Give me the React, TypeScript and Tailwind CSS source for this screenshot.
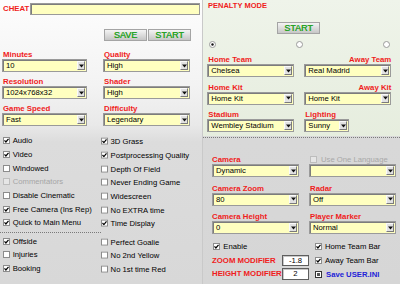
import React from "react";

function Lbl({ children, className = "" }: { children: React.ReactNode; className?: string }) {
  return (
    <div className={`whitespace-nowrap text-[7.8px] font-bold leading-[8px] text-[#f01c1c] ${className}`}>
      {children}
    </div>
  );
}

function Arrow() {
  return (
    <svg width="5" height="4" viewBox="0 0 5 4">
      <path d="M0 0.5H5L2.5 3.5Z" fill="#111" />
    </svg>
  );
}

function Select({ value, className = "" }: { value: string; className?: string }) {
  return (
    <div
      className={`flex h-[13px] border border-[#9a9a9a] bg-[#ffffc0] shadow-[inset_1px_1px_0_#7c7c7c] ${className}`}
    >
      <span className="flex-1 overflow-hidden whitespace-nowrap pl-[3px] text-[7.7px] leading-[11px] text-black">
        {value}
      </span>
      <span className="m-[1px] flex w-[8px] items-center justify-center border border-b-[#7a7a7a] border-l-[#fafafa] border-r-[#7a7a7a] border-t-[#fafafa] bg-[#e2e2e2]">
        <Arrow />
      </span>
    </div>
  );
}

function Box({ checked, disabled }: { checked?: boolean; disabled?: boolean }) {
  return (
    <span
      className={`flex h-[7px] w-[7px] shrink-0 items-center justify-center border ${
        disabled ? "border-[#bdbdbd] bg-[#e6e6e6]" : "border-[#8c8c8c] bg-white"
      }`}
    >
      {checked && (
        <svg width="5" height="5" viewBox="0 0 5 5">
          <path d="M0.5 2.4L1.9 4L4.5 0.8" stroke="#000" strokeWidth="1.2" fill="none" />
        </svg>
      )}
    </span>
  );
}

function Check({
  label,
  checked,
  disabled,
  className = "",
}: {
  label: string;
  checked?: boolean;
  disabled?: boolean;
  className?: string;
}) {
  return (
    <div className={`flex h-[13.7px] items-center ${className}`}>
      <Box checked={checked} disabled={disabled} />
      <span
        className={`ml-[3px] whitespace-nowrap text-[7.7px] leading-[9px] ${
          disabled ? "text-[#a6a6a6]" : "text-black"
        }`}
      >
        {label}
      </span>
    </div>
  );
}

function Btn({ label, className = "" }: { label: string; className?: string }) {
  return (
    <div
      className={`flex h-[12px] w-[43px] items-center justify-center border border-[#a4a4a4] bg-linear-to-b from-[#f4f4f4] to-[#c6c6c6] text-[9px] leading-[10px] text-[#26a326] [text-shadow:0.3px_0_0_#26a326] ${className}`}
    >
      {label}
    </div>
  );
}

function Radio({ checked }: { checked?: boolean }) {
  return (
    <svg width="7" height="7" viewBox="0 0 7 7">
      <circle cx="3.5" cy="3.5" r="3" fill="#fff" stroke="#9a9a9a" strokeWidth="1" />
      {checked && <circle cx="3.5" cy="3.5" r="1.2" fill="#111" />}
    </svg>
  );
}

const leftRows: [string, boolean, boolean?][] = [
  ["Audio", true],
  ["Video", true],
  ["Windowed", false],
  ["Commentators", false, true],
  ["Disable Cinematic", false],
  ["Free Camera (Ins Rep)", true],
  ["Quick to Main Menu", true],
];
const rightRows: [string, boolean][] = [
  ["3D Grass", true],
  ["Postprocessing Quality", true],
  ["Depth Of Field", false],
  ["Never Ending Game", false],
  ["Widescreen", false],
  ["No EXTRA time", false],
  ["Time Display", true],
];
const left2: [string, boolean][] = [
  ["Offside", true],
  ["Injuries", false],
  ["Booking", true],
];
const right2: [string, boolean][] = [
  ["Perfect Goalie", false],
  ["No 2nd Yellow", false],
  ["No 1st time Red", false],
];

export default function App() {
  return (
    <div className="flex h-[284px] w-[400px] overflow-hidden font-['Liberation_Sans',Arial,sans-serif] text-black">
      {/* LEFT PANEL */}
      <div className="flex h-[284px] w-[202px] flex-col bg-[linear-gradient(to_bottom,#fdfdfd_0%,#f3f3f3_30%,#e9e9e9_44%,#dcdcdc_50%,#d8d8d8_100%)]">
        <div className="mt-[3px] flex h-[12px] items-center pl-[3px]">
          <span className="w-[27px] text-[7.8px] font-bold leading-[8px] text-[#f01c1c]">CHEAT</span>
          <div className="h-[12px] w-[170px] border border-[#9a9a9a] bg-[#ffffc0] shadow-[inset_1px_1px_0_#7c7c7c]" />
        </div>
        <div className="mt-[14px] flex pl-[104px]">
          <Btn label="SAVE" />
          <Btn label="START" className="ml-[1px]" />
        </div>
        <div className="mt-[10px] grid grid-cols-[85px_87px] gap-x-[16px] gap-y-[6px] pl-[2px]">
          <div>
            <Lbl className="pl-[1px]">Minutes</Lbl>
            <Select value="10" />
          </div>
          <div>
            <Lbl className="pl-[1px]">Quality</Lbl>
            <Select value="High" />
          </div>
          <div>
            <Lbl className="pl-[1px]">Resolution</Lbl>
            <Select value="1024x768x32" />
          </div>
          <div>
            <Lbl className="pl-[1px]">Shader</Lbl>
            <Select value="High" />
          </div>
          <div>
            <Lbl className="pl-[1px]">Game Speed</Lbl>
            <Select value="Fast" />
          </div>
          <div>
            <Lbl className="pl-[1px]">Difficulty</Lbl>
            <Select value="Legendary" />
          </div>
        </div>
        <div className="mt-[8px] flex flex-col">
          {leftRows.map((r, i) => (
            <div key={r[0]} className="flex">
              <Check label={r[0]} checked={r[1]} disabled={r[2]} className="w-[100.6px] pl-[2.7px]" />
              <Check label={rightRows[i][0]} checked={rightRows[i][1]} className="translate-y-[0.6px]" />
            </div>
          ))}
          <div className="mt-[2px] mb-[1.5px] w-[101px] border-t border-dotted border-[#7a7a7a]" />
          {left2.map((r, i) => (
            <div key={r[0]} className="flex">
              <Check label={r[0]} checked={r[1]} className="w-[100.6px] pl-[2.7px]" />
              <Check label={right2[i][0]} checked={right2[i][1]} className="translate-y-[0.6px]" />
            </div>
          ))}
        </div>
      </div>

      {/* RIGHT PANEL */}
      <div className="flex h-[284px] w-[198px] flex-col border-l border-[#c9c9c9] bg-[linear-gradient(to_bottom,#dadada,#d6d6d6)]">
        <div className="flex h-[136px] flex-col bg-linear-to-b from-[#eff4ea] to-[#e6edde]">
          <div className="mt-[1.5px] pl-[5px] text-[7.5px] font-bold leading-[8px] text-[#f01c1c]">PENALTY MODE</div>
          <div className="mt-[12.5px] pl-[74px]">
            <Btn label="START" />
          </div>
          <div className="relative mt-[7px] h-[7px]">
            <span className="absolute left-[6px] top-0">
              <Radio checked />
            </span>
            <span className="absolute left-[92.5px] top-0">
              <Radio />
            </span>
            <span className="absolute left-[180px] top-0">
              <Radio />
            </span>
          </div>
          <div className="mt-[8px] grid grid-cols-[87px_87px] gap-x-[10px] gap-y-[6.5px] pl-[4.3px]">
            <div>
              <Lbl className="pl-[1px]">Home Team</Lbl>
              <Select value="Chelsea" />
            </div>
            <div>
              <Lbl className="text-right">Away Team</Lbl>
              <Select value="Real Madrid" />
            </div>
            <div>
              <Lbl className="pl-[1px]">Home Kit</Lbl>
              <Select value="Home Kit" />
            </div>
            <div>
              <Lbl className="text-right">Away Kit</Lbl>
              <Select value="Home Kit" />
            </div>
            <div>
              <Lbl className="pl-[1px]">Stadium</Lbl>
              <Select value="Wembley Stadium" />
            </div>
            <div>
              <Lbl className="pl-[1px]">Lighting</Lbl>
              <Select value="Sunny" className="w-[45px]" />
            </div>
          </div>
        </div>
        <div className="mt-[1px] border-t border-dotted border-[#7a7a7a]" />
        <div className="mt-[17px] grid grid-cols-[87px_87px] gap-x-[10px] gap-y-[6.5px] pl-[9px]">
          <div>
            <Lbl className="leading-[9px]">Camera</Lbl>
            <Select value="Dynamic" />
          </div>
          <div>
            <div className="flex h-[9px] items-center pl-[1px]">
              <Box disabled />
              <span className="ml-[4px] whitespace-nowrap text-[7.7px] leading-[9px] text-[#a8a8a8]">Use One Language</span>
            </div>
            <Select value="" />
          </div>
          <div>
            <Lbl className="leading-[9px]">Camera Zoom</Lbl>
            <Select value="80" />
          </div>
          <div>
            <Lbl className="leading-[9px] pl-[1px]">Radar</Lbl>
            <Select value="Off" />
          </div>
          <div>
            <Lbl className="leading-[9px]">Camera Height</Lbl>
            <Select value="0" />
          </div>
          <div>
            <Lbl className="leading-[9px] pl-[1px]">Player Marker</Lbl>
            <Select value="Normal" />
          </div>
        </div>
        <div className="mt-[6px] flex pl-[9px]">
          <div className="flex w-[103px] flex-col">
            <Check label="Enable" checked className="pl-[1.3px]" />
            <div className="flex h-[13.7px] items-center">
              <Lbl className="w-[70px] text-[7.5px]">ZOOM MODIFIER</Lbl>
              <div className="h-[11px] w-[27px] border border-[#5e5e5e] bg-white text-center text-[7.7px] leading-[9px] shadow-[inset_1px_1px_0_#c8c8c8]">
                -1.8
              </div>
            </div>
            <div className="flex h-[13.7px] items-center">
              <Lbl className="w-[70px] text-[7.5px]">HEIGHT MODIFIER</Lbl>
              <div className="h-[12px] w-[27px] border border-[#5e5e5e] bg-white text-center text-[7.7px] leading-[10px] shadow-[inset_1px_1px_0_#c8c8c8]">
                2
              </div>
            </div>
          </div>
          <div className="flex flex-col">
            <Check label="Home Team Bar" checked />
            <Check label="Away Team Bar" checked />
            <div className="flex h-[13.7px] items-center">
              <span className="flex h-[7px] w-[7px] items-center justify-center border border-[#333] bg-white">
                <span className="h-[3px] w-[3px] bg-[#555]" />
              </span>
              <span className="ml-[4px] whitespace-nowrap text-[7.7px] font-bold leading-[9px] text-[#2323d8]">
                Save USER.INI
              </span>
            </div>
          </div>
        </div>
      </div>
    </div>
  );
}
